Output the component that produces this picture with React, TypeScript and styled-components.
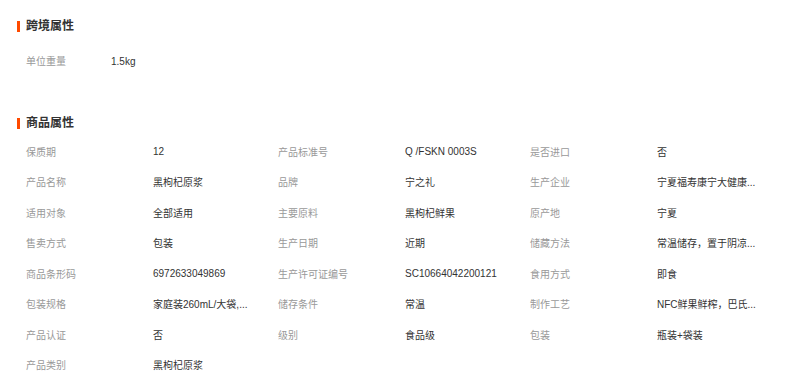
import React from "react";
import styled, { createGlobalStyle } from "styled-components";

const GlobalStyle = createGlobalStyle`
  html, body {
    margin: 0;
    padding: 0;
    background: #ffffff;
  }
  body {
    font-family: "Liberation Sans", "Noto Sans CJK SC", Arial, sans-serif;
    -webkit-font-smoothing: antialiased;
  }
`;

const Page = styled.div`
  width: 788px;
  height: 388px;
  box-sizing: border-box;
  padding: 18px 6px 0 17px;
  background: #fff;
  overflow: hidden;
`;

const Section = styled.section<{ $gap?: number }>`
  margin-top: ${(p) => p.$gap ?? 0}px;
`;

const Heading = styled.h3`
  display: flex;
  align-items: center;
  gap: 6px;
  margin: 0;
  height: 16px;
  line-height: 16px;
  font-size: 12px;
  font-weight: 700;
  color: #333;
  &::before {
    content: "";
    display: block;
    width: 3px;
    height: 11px;
    background: #ff4a00;
  }
`;

const SimpleRow = styled.div`
  display: flex;
  margin-top: 20px;
  padding-left: 9px;
  height: 16px;
  line-height: 16px;
  font-size: 10px;
`;

const Label = styled.span<{ $w: number }>`
  flex: 0 0 ${(p) => p.$w}px;
  color: #999;
  white-space: nowrap;
`;

const Value = styled.span`
  color: #333;
  white-space: nowrap;
`;

const Grid = styled.div`
  display: grid;
  grid-template-columns: repeat(3, 252px);
  grid-auto-rows: 30.5px;
  margin-top: 5px;
  padding-left: 9px;
  font-size: 10px;
`;

const Item = styled.div`
  display: flex;
  align-items: center;
  min-width: 0;
`;

const crossBorder = [{ k: "单位重量", v: "1.5kg" }];

const attrs: { k: string; v: string }[] = [
  { k: "保质期", v: "12" },
  { k: "产品标准号", v: "Q /FSKN 0003S" },
  { k: "是否进口", v: "否" },
  { k: "产品名称", v: "黑枸杞原浆" },
  { k: "品牌", v: "宁之礼" },
  { k: "生产企业", v: "宁夏福寿康宁大健康..." },
  { k: "适用对象", v: "全部适用" },
  { k: "主要原料", v: "黑枸杞鲜果" },
  { k: "原产地", v: "宁夏" },
  { k: "售卖方式", v: "包装" },
  { k: "生产日期", v: "近期" },
  { k: "储藏方法", v: "常温储存，置于阴凉..." },
  { k: "商品条形码", v: "6972633049869" },
  { k: "生产许可证编号", v: "SC10664042200121" },
  { k: "食用方式", v: "即食" },
  { k: "包装规格", v: "家庭装260mL/大袋,..." },
  { k: "储存条件", v: "常温" },
  { k: "制作工艺", v: "NFC鲜果鲜榨，巴氏..." },
  { k: "产品认证", v: "否" },
  { k: "级别", v: "食品级" },
  { k: "包装", v: "瓶装+袋装" },
  { k: "产品类别", v: "黑枸杞原浆" },
];

export default function App() {
  return (
    <>
      <GlobalStyle />
      <Page>
        <Section>
          <Heading>跨境属性</Heading>
          {crossBorder.map((a) => (
            <SimpleRow key={a.k}>
              <Label $w={85}>{a.k}</Label>
              <Value>{a.v}</Value>
            </SimpleRow>
          ))}
        </Section>
        <Section $gap={45}>
          <Heading>商品属性</Heading>
          <Grid>
            {attrs.map((a) => (
              <Item key={a.k}>
                <Label $w={127}>{a.k}</Label>
                <Value>{a.v}</Value>
              </Item>
            ))}
          </Grid>
        </Section>
      </Page>
    </>
  );
}
